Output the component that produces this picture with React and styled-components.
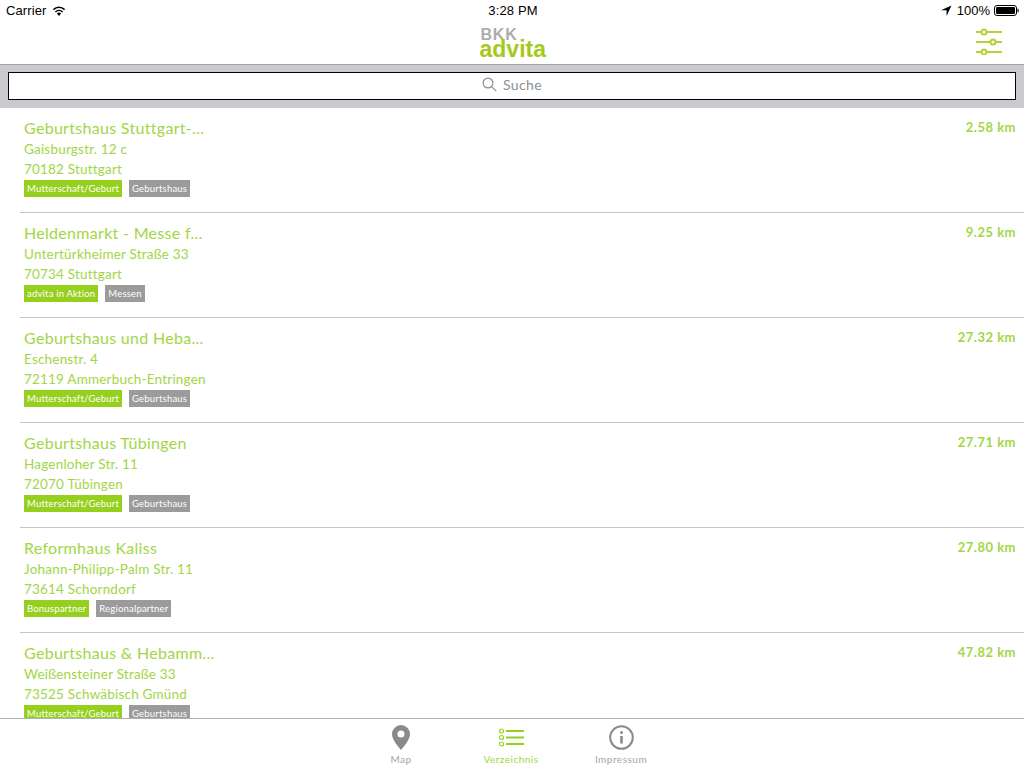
import styled, { createGlobalStyle } from 'styled-components';

const GREEN = '#96d01e';
const TEXT = '#a2d646';

const places = [
  { name: 'Geburtshaus Stuttgart-...', street: 'Gaisburgstr. 12 c', city: '70182 Stuttgart', km: '2.58 km', tags: ['Mutterschaft/Geburt', 'Geburtshaus'] },
  { name: 'Heldenmarkt - Messe f...', street: 'Untertürkheimer Straße 33', city: '70734 Stuttgart', km: '9.25 km', tags: ['advita in Aktion', 'Messen'] },
  { name: 'Geburtshaus und Heba...', street: 'Eschenstr. 4', city: '72119 Ammerbuch-Entringen', km: '27.32 km', tags: ['Mutterschaft/Geburt', 'Geburtshaus'] },
  { name: 'Geburtshaus Tübingen', street: 'Hagenloher Str. 11', city: '72070 Tübingen', km: '27.71 km', tags: ['Mutterschaft/Geburt', 'Geburtshaus'] },
  { name: 'Reformhaus Kaliss', street: 'Johann-Philipp-Palm Str. 11', city: '73614 Schorndorf', km: '27.80 km', tags: ['Bonuspartner', 'Regionalpartner'] },
  { name: 'Geburtshaus & Hebamm...', street: 'Weißensteiner Straße 33', city: '73525 Schwäbisch Gmünd', km: '47.82 km', tags: ['Mutterschaft/Geburt', 'Geburtshaus'] },
];

const Global = createGlobalStyle`
  html, body { margin: 0; padding: 0; background: #fff; }
  * { box-sizing: border-box; }
`;

const Screen = styled.div`
  width: 1024px;
  height: 768px;
  display: flex;
  flex-direction: column;
  overflow: hidden;
  font-family: Lato, "Liberation Sans", sans-serif;
`;

const StatusBar = styled.div`
  height: 20px;
  flex: none;
  display: grid;
  grid-template-columns: 1fr auto 1fr;
  align-items: center;
  padding: 1px 5px 0 6px;
  font-family: "Liberation Sans", sans-serif;
  font-size: 13px;
  color: #000;
`;

const StatusLeft = styled.div`
  display: flex;
  align-items: center;
  gap: 6px;
  letter-spacing: 0.1px;
`;

const StatusTime = styled.span`
  letter-spacing: 0.15px;
  margin-left: 1px;
`;

const StatusRight = styled.div`
  display: flex;
  align-items: center;
  justify-content: flex-end;
  gap: 4px;
`;

const ArrowWrap = styled.span`
  display: flex;
  margin-right: 1px;
`;

const NavBar = styled.div`
  height: 45px;
  flex: none;
  display: flex;
  align-items: center;
  justify-content: center;
  border-bottom: 1px solid #a4a4a6;
  position: relative;
`;

const Logo = styled.div`
  display: flex;
  flex-direction: column;
  width: 67px;
  margin: 2px 0 0 2px;
  font-family: "Liberation Sans", sans-serif;
  font-weight: 700;
`;

const LogoTop = styled.span`
  font-size: 16px;
  line-height: 12px;
  color: #adadad;
  letter-spacing: 0.8px;
  margin-left: 1px;
`;

const LogoBottom = styled.span`
  font-size: 23px;
  line-height: 16px;
  color: #a5c81c;
`;

const FilterButton = styled.div`
  position: absolute;
  right: 21px;
  top: 8px;
  display: flex;
`;

const SearchBar = styled.div`
  height: 43px;
  flex: none;
  background: #c9c9ce;
  padding: 7px 8px 8px;
`;

const SearchField = styled.div`
  height: 28px;
  padding-bottom: 3px;
  background: #fff;
  border: 1px solid #000;
  display: flex;
  align-items: center;
  justify-content: center;
  gap: 6px;
  font-size: 14px;
  letter-spacing: 0.4px;
  color: #8e8e93;
`;

const List = styled.div`
  flex: 1;
  min-height: 0;
  overflow: hidden;
`;

const Row = styled.div`
  height: 105px;
  margin-left: 20px;
  padding: 9px 8px 0 4px;
  border-bottom: 1px solid #c4c4c4;
  display: flex;
  justify-content: space-between;
  color: ${TEXT};
`;

const Name = styled.div`
  font-size: 16px;
  line-height: 22px;
  letter-spacing: 0.3px;
`;

const Line = styled.div`
  font-size: 13.5px;
  line-height: 20px;
  letter-spacing: 0.2px;
`;

const Tags = styled.div`
  display: flex;
  gap: 7px;
  margin-top: 1px;
`;

const Tag = styled.span`
  height: 17px;
  line-height: 17px;
  padding: 0 3px;
  font-size: 9.5px;
  letter-spacing: 0.2px;
  color: #fff;
  background: ${p => (p.$grey ? '#9b9b9b' : GREEN)};
`;

const Distance = styled.div`
  font-size: 13px;
  font-weight: 700;
  line-height: 20px;
  letter-spacing: 0.5px;
`;

const TabBar = styled.div`
  height: 50px;
  flex: none;
  border-top: 1px solid #b2b2b2;
  padding-right: 2px;
  display: flex;
  justify-content: center;
  background: #fff;
`;

const Tab = styled.div`
  width: 110px;
  display: flex;
  flex-direction: column;
  align-items: center;
  padding-top: 5px;
  font-size: 10px;
  letter-spacing: 0.5px;
  color: ${p => (p.$active ? TEXT : '#a5a5a5')};
`;

const TabIcon = styled.div`
  height: 27px;
  display: flex;
  align-items: center;
  margin-bottom: 2px;
`;

const Wifi = () => (
  <svg width="14" height="10" viewBox="0 0 14 10">
    <path d="M7 10 4.9 7.6a3 3 0 0 1 4.2 0Z" fill="#000" />
    <path d="M3.4 6a5.2 5.2 0 0 1 7.2 0M1.4 3.6a8 8 0 0 1 11.2 0" fill="none" stroke="#000" strokeWidth="1.5" />
  </svg>
);

const Arrow = () => (
  <svg width="11" height="11" viewBox="0 0 11 11">
    <path d="M10.5.5 0 5.3h5.6V11Z" fill="#000" />
  </svg>
);

const Battery = () => (
  <svg width="25" height="11" viewBox="0 0 25 11">
    <rect x=".5" y=".5" width="22" height="10" rx="2.5" fill="none" stroke="#000" />
    <rect x="2" y="2" width="19" height="7" rx="1.2" fill="#000" />
    <path d="M23.5 3.5c1 .2 1.2 1 1.2 2s-.2 1.8-1.2 2Z" fill="#000" />
  </svg>
);

const Sliders = () => (
  <svg width="28" height="27" viewBox="0 0 28 27" fill="none" stroke="#b5d334" strokeWidth="2">
    <path d="M1 4h5.5M11.5 4H27M1 14h14.5M20.5 14H27M1 24h5.5M11.5 24H27" />
    <circle cx="9" cy="4" r="2.5" />
    <circle cx="18" cy="14" r="2.5" />
    <circle cx="9" cy="24" r="2.5" />
  </svg>
);

const Magnifier = () => (
  <svg width="15" height="15" viewBox="0 0 15 15" fill="none" stroke="#8e8e93" strokeWidth="1.2">
    <circle cx="6" cy="6" r="4.9" />
    <path d="M9.6 9.6 14.2 14.2" />
  </svg>
);

const Pin = () => (
  <svg width="18" height="25" viewBox="0 0 18 25">
    <path fillRule="evenodd" fill="#8a8a8a" d="M9 0a9 9 0 0 1 9 9c0 5.5-5.5 11.5-9 16C5.500 20.500 0 14.500 0 9a9 9 0 0 1 9-9Zm0 5.500a3.500 3.500 0 1 0 0 7 3.500 3.500 0 0 0 0-7Z" />
  </svg>
);

const ListIcon = () => (
  <svg width="25" height="19" viewBox="0 0 25 19" fill="none" stroke="#96d01e">
    <g strokeWidth="1.2">
      <circle cx="2.5" cy="3" r="2" />
      <circle cx="2.5" cy="9.5" r="2" />
      <circle cx="2.5" cy="16" r="2" />
    </g>
    <path d="M7 3h18M7 9.5h18M7 16h18" strokeWidth="1.8" />
  </svg>
);

const InfoIcon = () => (
  <svg width="25" height="25" viewBox="0 0 25 25" fill="none">
    <circle cx="12.5" cy="12.5" r="11.3" stroke="#8a8a8a" strokeWidth="2" />
    <circle cx="12.5" cy="7.5" r="1.5" fill="#8a8a8a" />
    <path d="M12.5 11v7.5" stroke="#8a8a8a" strokeWidth="2.6" />
  </svg>
);

export default function App() {
  return (
    <Screen>
      <Global />
      <StatusBar>
        <StatusLeft>
          Carrier <Wifi />
        </StatusLeft>
        <StatusTime>3:28 PM</StatusTime>
        <StatusRight>
          <ArrowWrap><Arrow /></ArrowWrap> 100% <Battery />
        </StatusRight>
      </StatusBar>
      <NavBar>
        <Logo>
          <LogoTop>BKK</LogoTop>
          <LogoBottom>advita</LogoBottom>
        </Logo>
        <FilterButton>
          <Sliders />
        </FilterButton>
      </NavBar>
      <SearchBar>
        <SearchField>
          <Magnifier />
          Suche
        </SearchField>
      </SearchBar>
      <List>
        {places.map(place => (
          <Row key={place.km}>
            <div>
              <Name>{place.name}</Name>
              <Line>{place.street}</Line>
              <Line>{place.city}</Line>
              <Tags>
                <Tag>{place.tags[0]}</Tag>
                <Tag $grey>{place.tags[1]}</Tag>
              </Tags>
            </div>
            <Distance>{place.km}</Distance>
          </Row>
        ))}
      </List>
      <TabBar>
        <Tab>
          <TabIcon><Pin /></TabIcon>
          Map
        </Tab>
        <Tab $active>
          <TabIcon><ListIcon /></TabIcon>
          Verzeichnis
        </Tab>
        <Tab>
          <TabIcon><InfoIcon /></TabIcon>
          Impressum
        </Tab>
      </TabBar>
    </Screen>
  );
}
